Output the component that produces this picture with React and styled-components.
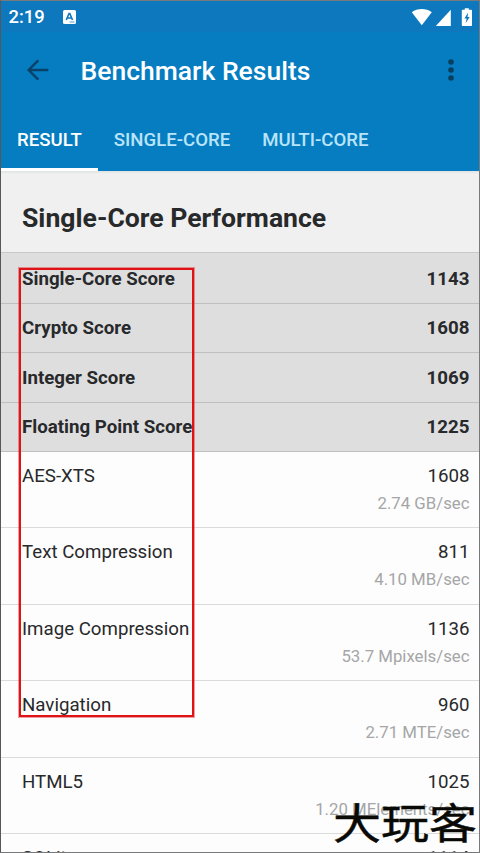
import styled, { createGlobalStyle } from 'styled-components'

const GlobalStyle = createGlobalStyle`
    * {
        box-sizing: border-box;
    }
    body {
        margin: 0;
        overflow: hidden;
        background-color: #fdfdfd;
    }
`
const Screen = styled.div`
    position: relative;
    display: flex;
    flex-direction: column;
    width: 480px;
    height: 853px;
    overflow: hidden;
    border: 1px solid #77797b;
    border-left-color: #555759;
    background-color: #fdfdfd;
    color: #28292b;
    font-family: Roboto, sans-serif;
`
const Header = styled.header`
    flex: none;
    height: 170px;
    background-color: #067dc0;
    color: #fff;
`
const StatusBar = styled.div`
    display: flex;
    align-items: center;
    height: 31px;
    padding: 0 6px 0 7.5px;
    background-color: #0d78bd;
    font-size: 18.4px;
    font-weight: 500;
`
const Clock = styled.span`
    width: 54px;
    line-height: 31px;
`
const StatusIcons = styled.div`
    display: flex;
    align-items: center;
    margin-left: auto;
    svg {
        display: block;
    }
`
const Toolbar = styled.div`
    display: flex;
    align-items: center;
    height: 76px;
    padding: 0 24px 0 25px;
`
const Title = styled.h1`
    flex: 1;
    margin: 2px 0 0 30.5px;
    font-size: 26.5px;
    font-weight: 500;
    line-height: 76px;
    white-space: nowrap;
`
const Tabs = styled.nav`
    display: flex;
    height: 63px;
`
const Tab = styled.div`
    padding: 0 16px;
    height: 63px;
    border-bottom: 3px solid ${props => props.$active ? "#fff" : "transparent"};
    color: ${props => props.$active ? "#fff" : "#b9e4fa"};
    font-size: 18.6px;
    font-weight: 500;
    line-height: 65px;
    white-space: nowrap;
`
const SectionTitle = styled.h2`
    flex: none;
    height: 82.4px;
    margin: 0;
    padding-left: 21px;
    border-bottom: 1px solid #cacacb;
    background: linear-gradient(#dfe2e3, #f0f0f0 3px);
    font-size: 26.6px;
    font-weight: 700;
    line-height: 93px;
`
const Row = styled.div`
    flex: none;
    display: flex;
    justify-content: space-between;
    height: ${props => props.$total ? "49.4px" : "76.4px"};
    padding: ${props => props.$total ? "11.4px" : "11px"} 9.5px 0 21px;
    border-bottom: 1px solid ${props => props.$total ? "#bfbfc1" : "#dbdbdb"};
    background-color: ${props => props.$total ? "#dededf" : "#fdfdfd"};
    font-size: 18.7px;
    font-weight: ${props => props.$total ? 700 : 400};
    line-height: 26px;
    white-space: nowrap;
    ${SectionTitle} + & {
        height: 50.5px;
        padding-top: 12.5px;
    }
`
const Result = styled.div`
    text-align: right;
`
const Rate = styled.div`
    padding-top: 1px;
    color: #a5a6a7;
    font-size: 16.8px;
`
const Highlight = styled.div`
    position: absolute;
    left: 18px;
    top: 267px;
    width: 175px;
    height: 449px;
    border: 2px solid #df1215;
    box-shadow: 0 0 0 1px rgba(223, 18, 21, 0.4);
`
const Watermark = styled.div`
    position: absolute;
    left: 332px;
    top: 792px;
    transform: scaleY(0.88);
    transform-origin: center;
    color: #090905;
    font-family: "Noto Sans CJK SC", sans-serif;
    font-size: 48px;
    font-weight: 400;
    line-height: 56px;
    white-space: nowrap;
    -webkit-text-stroke: 0.5px #090905;
`

const totals = [
    { name: 'Single-Core Score', score: 1143 },
    { name: 'Crypto Score', score: 1608 },
    { name: 'Integer Score', score: 1069 },
    { name: 'Floating Point Score', score: 1225 },
]
const workloads = [
    { name: 'AES-XTS', score: 1608, rate: '2.74 GB/sec' },
    { name: 'Text Compression', score: 811, rate: '4.10 MB/sec' },
    { name: 'Image Compression', score: 1136, rate: '53.7 Mpixels/sec' },
    { name: 'Navigation', score: 960, rate: '2.71 MTE/sec' },
    { name: 'HTML5', score: 1025, rate: '1.20 MElements/sec' },
    { name: 'SQLite', score: 1114 },
]

const KeyboardIcon = () => (
    <svg width="13" height="14" viewBox="0 0 13 14">
        <rect width="13" height="14" rx="1.5" fill="#fff" />
        <path d="M3.3 10 6 3.5h.8L9.5 10M4.3 8h4.2" fill="none" stroke="#0d78bd" strokeWidth="1.6" />
        <path d="M6.5 12h5" stroke="#0d78bd" strokeWidth="0.7" />
    </svg>
)
const SignalIcons = () => (
    <svg width="62" height="20" viewBox="0 0 62 20" fill="#fff">
        <path d="M0.8 5.3C6.3.9 15.3.9 20.8 5.3L10.8 18.2Z" />
        <path d="M39.8 2.7V19H24.8Z" />
        <path d="M53.8 1.2h4v1.6h2.2c.7 0 1 .4 1 1V18c0 .7-.4 1-1 1h-8.2c-.6 0-1-.4-1-1V3.8c0-.6.4-1 1-1h2z" />
        <path d="M57.2 5.5 53.4 11.5h2.2l-.9 4.5 4-6.1h-2.200z" fill="#0d78bd" />
    </svg>
)
const BackIcon = () => (
    <svg width="24" height="22" viewBox="0 0 24 22" fill="none" stroke="#084367" strokeWidth="2.4">
        <path d="M22.3 11H3M12.3 1.3 2.6 11l9.7 9.7" />
    </svg>
)
const MoreIcon = () => (
    <svg width="8" height="24" viewBox="0 0 8 24" fill="#083f60">
        <circle cx="4" cy="4" r="2.8" />
        <circle cx="4" cy="12" r="2.8" />
        <circle cx="4" cy="20" r="2.8" />
    </svg>
)

const App = () => {
    return (
        <>
            <GlobalStyle />
            <Screen>
                <Header>
                    <StatusBar>
                        <Clock>2:19</Clock>
                        <KeyboardIcon />
                        <StatusIcons>
                            <SignalIcons />
                        </StatusIcons>
                    </StatusBar>
                    <Toolbar>
                        <BackIcon />
                        <Title>Benchmark Results</Title>
                        <MoreIcon />
                    </Toolbar>
                    <Tabs>
                        <Tab $active>RESULT</Tab>
                        <Tab>SINGLE-CORE</Tab>
                        <Tab>MULTI-CORE</Tab>
                    </Tabs>
                </Header>
                <SectionTitle>Single-Core Performance</SectionTitle>
                {totals.map((el) => (
                    <Row key={el.name} $total>
                        <span>{el.name}</span>
                        <span>{el.score}</span>
                    </Row>
                ))}
                {workloads.map((el) => (
                    <Row key={el.name}>
                        <span>{el.name}</span>
                        <Result>
                            {el.score}
                            <Rate>{el.rate}</Rate>
                        </Result>
                    </Row>
                ))}
                <Highlight />
                <Watermark>大玩客</Watermark>
            </Screen>
        </>
    )
}
export default App
